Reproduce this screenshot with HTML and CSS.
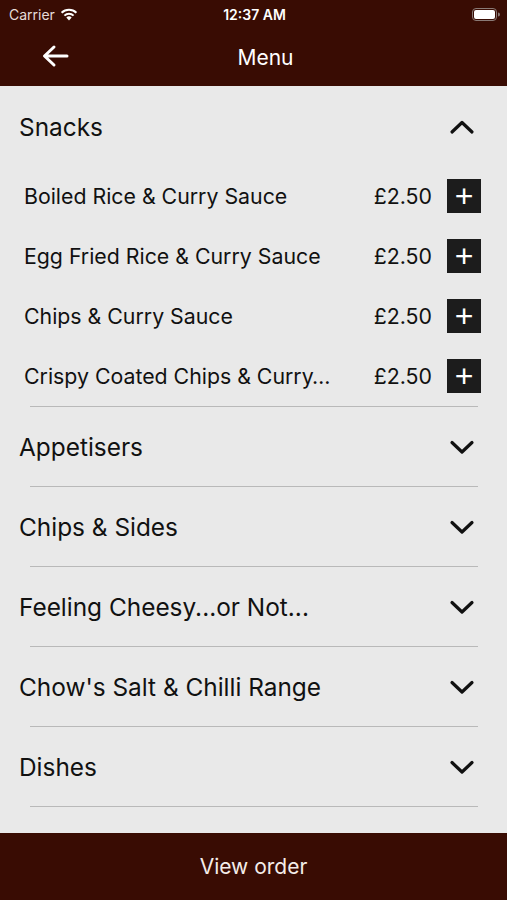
FILE: index.html
```html
<!DOCTYPE html>
<html lang="en">
<head>
    <meta charset="UTF-8">
    <meta name="viewport" content="width=device-width, initial-scale=1.0">
    <title>Menu</title>
    <link rel="stylesheet" href="styles.css">
</head>
<body>
    <div class="app">
        <header class="topbar">
            <div class="status">
                <div class="status-left">
                    <span>Carrier</span>
                    <svg class="wifi" width="18" height="13" viewBox="0 0 18 13">
                        <path d="M9 12.5 L6.3 9.6 A4 4 0 0 1 11.7 9.6 Z" fill="#fff"/>
                        <path d="M4.4 7.6 A6.6 6.6 0 0 1 13.6 7.6" stroke="#fff" stroke-width="2" fill="none"/>
                        <path d="M1.6 4.8 A10.6 10.6 0 0 1 16.4 4.8" stroke="#fff" stroke-width="2" fill="none"/>
                    </svg>
                </div>
                <div class="status-time">12:37 AM</div>
                <div class="status-right">
                    <svg width="28" height="13" viewBox="0 0 28 13">
                        <rect x="0.5" y="0.5" width="24" height="12" rx="3.5" fill="none" stroke="#8a7a76"/>
                        <rect x="2" y="2" width="21" height="9" rx="2" fill="#fff"/>
                        <path d="M26 4.5 A2 2 0 0 1 26 8.5 Z" fill="#8a7a76"/>
                    </svg>
                </div>
            </div>
            <nav class="navbar">
                <svg class="back" width="28" height="24" viewBox="0 0 28 24">
                    <path d="M26 12 H4 M13 3 L3.5 12 L13 21" stroke="#fff" stroke-width="3" fill="none" stroke-linecap="round" stroke-linejoin="round"/>
                </svg>
                <h1>Menu</h1>
            </nav>
        </header>

        <main class="menu">
            <section class="category open">
                <div class="cat-head">
                    <span>Snacks</span>
                    <svg class="chev" width="26" height="16" viewBox="0 0 26 16">
                        <path d="M3 13 L13 3.5 L23 13" stroke="#111" stroke-width="3.2" fill="none" stroke-linecap="round" stroke-linejoin="round"/>
                    </svg>
                </div>
                <ul class="items">
                    <li class="item"><span class="name">Boiled Rice &amp; Curry Sauce</span><span class="price">£2.50</span><button class="add">+</button></li>
                    <li class="item"><span class="name">Egg Fried Rice &amp; Curry Sauce</span><span class="price">£2.50</span><button class="add">+</button></li>
                    <li class="item"><span class="name">Chips &amp; Curry Sauce</span><span class="price">£2.50</span><button class="add">+</button></li>
                    <li class="item"><span class="name">Crispy Coated Chips &amp; Curry…</span><span class="price">£2.50</span><button class="add">+</button></li>
                </ul>
            </section>

            <section class="category">
                <div class="cat-head"><span>Appetisers</span>
                    <svg class="chev" width="26" height="16" viewBox="0 0 26 16"><path d="M3 3.5 L13 13 L23 3.5" stroke="#111" stroke-width="3.2" fill="none" stroke-linecap="round" stroke-linejoin="round"/></svg>
                </div>
            </section>
            <section class="category">
                <div class="cat-head"><span>Chips &amp; Sides</span>
                    <svg class="chev" width="26" height="16" viewBox="0 0 26 16"><path d="M3 3.5 L13 13 L23 3.5" stroke="#111" stroke-width="3.2" fill="none" stroke-linecap="round" stroke-linejoin="round"/></svg>
                </div>
            </section>
            <section class="category">
                <div class="cat-head"><span>Feeling Cheesy...or Not...</span>
                    <svg class="chev" width="26" height="16" viewBox="0 0 26 16"><path d="M3 3.5 L13 13 L23 3.5" stroke="#111" stroke-width="3.2" fill="none" stroke-linecap="round" stroke-linejoin="round"/></svg>
                </div>
            </section>
            <section class="category">
                <div class="cat-head"><span>Chow's Salt &amp; Chilli Range</span>
                    <svg class="chev" width="26" height="16" viewBox="0 0 26 16"><path d="M3 3.5 L13 13 L23 3.5" stroke="#111" stroke-width="3.2" fill="none" stroke-linecap="round" stroke-linejoin="round"/></svg>
                </div>
            </section>
            <section class="category">
                <div class="cat-head"><span>Dishes</span>
                    <svg class="chev" width="26" height="16" viewBox="0 0 26 16"><path d="M3 3.5 L13 13 L23 3.5" stroke="#111" stroke-width="3.2" fill="none" stroke-linecap="round" stroke-linejoin="round"/></svg>
                </div>
            </section>
        </main>

        <footer class="order-bar">View order</footer>
    </div>
</body>
</html>
```

FILE: styles.css
```css
* {
    box-sizing: border-box;
}
body {
    margin: 0;
    font-family: Inter, "Liberation Sans", sans-serif;
    background-color: #e9e9e9;
    color: #111111;
}
.app {
    width: 507px;
    height: 900px;
    display: flex;
    flex-direction: column;
    overflow: hidden;
}
.topbar {
    background-color: #390c03;
    color: #ffffff;
    height: 86px;
    flex-shrink: 0;
}
.status {
    height: 28px;
    display: grid;
    grid-template-columns: 1fr auto 1fr;
    align-items: center;
    padding: 0 7px 0 9px;
    font-size: 14px;
}
.status-left {
    display: flex;
    align-items: center;
    gap: 5px;
    color: #e6dcd9;
}
.status-time {
    font-weight: 600;
    font-size: 14px;
}
.status-right {
    display: flex;
    justify-content: flex-end;
}
.navbar {
    height: 58px;
    display: flex;
    align-items: center;
    justify-content: center;
    position: relative;
}
.navbar h1 {
    margin: 0 0 0 24px;
    font-size: 21px;
    font-weight: 400;
}
.back {
    position: absolute;
    left: 41px;
    top: 16px;
}
.menu {
    flex: 1;
    overflow: hidden;
}
.category::after {
    content: "";
    display: block;
    height: 1px;
    margin: 0 29px 0 30px;
    background-color: #b9b9b9;
}
.cat-head {
    height: 79px;
    display: flex;
    align-items: center;
    justify-content: space-between;
    padding: 0 32px 0 19px;
    font-size: 24.4px;
}
.open .cat-head {
    height: 80px;
    padding-top: 1px;
}
.items {
    list-style: none;
    margin: 0;
    padding: 0;
}
.item {
    height: 60px;
    display: flex;
    align-items: center;
    padding: 0 26px 0 24px;
    font-size: 21.3px;
}
.item .name {
    flex: 1;
}
.item .price {
    margin-right: 15px;
}
.add {
    width: 34px;
    height: 34px;
    border: none;
    padding: 0;
    background-color: #1c1c1c;
    color: #ffffff;
    font-size: 32px;
    line-height: 32px;
    font-family: "Liberation Sans", sans-serif;
    font-weight: 300;
}
.order-bar {
    height: 67px;
    flex-shrink: 0;
    background-color: #390c03;
    color: #f4ece9;
    display: flex;
    align-items: center;
    justify-content: center;
    font-size: 21px;
}
```
